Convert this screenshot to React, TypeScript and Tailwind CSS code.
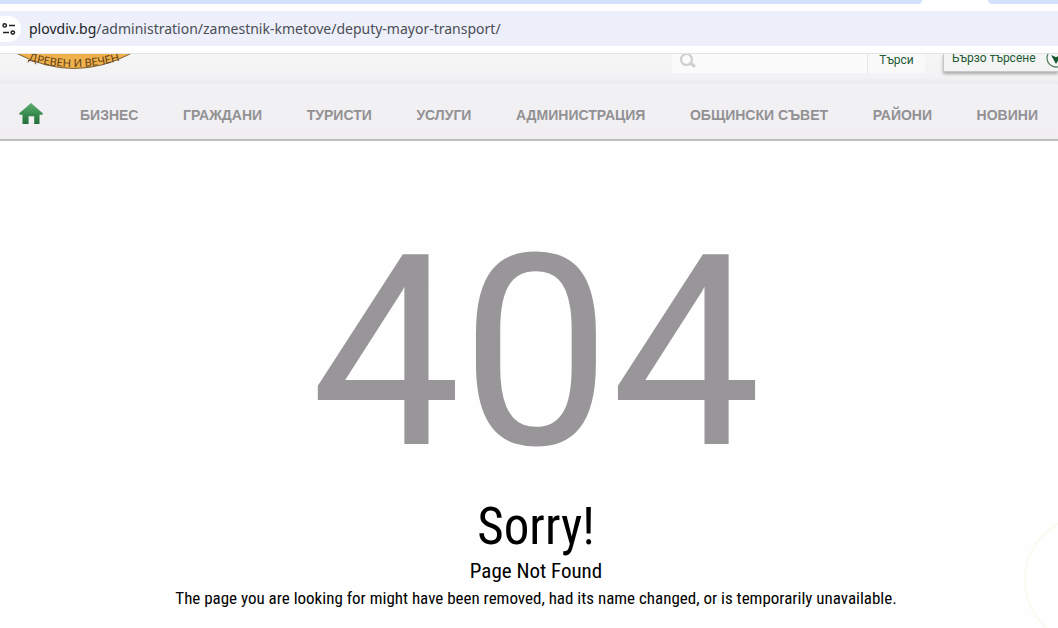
import React from 'react'

type NavItem = {
  label: string
  href: string
}

const navItems: NavItem[] = [
  { label: 'БИЗНЕС', href: '#business' },
  { label: 'ГРАЖДАНИ', href: '#citizens' },
  { label: 'ТУРИСТИ', href: '#tourists' },
  { label: 'УСЛУГИ', href: '#services' },
  { label: 'АДМИНИСТРАЦИЯ', href: '#administration' },
  { label: 'ОБЩИНСКИ СЪВЕТ', href: '#council' },
  { label: 'РАЙОНИ', href: '#districts' },
  { label: 'НОВИНИ', href: '#news' },
]

const SiteSettingsIcon: React.FC = () => (
  <svg viewBox="0 0 14 14" className="w-[14px] h-[14px]" fill="none" stroke="#1f2024" strokeWidth="1.5" aria-hidden="true">
    <circle cx="2.700" cy="3.400" r="1.700" />
    <path d="M7 3.400h6M1 10.600h6" />
    <circle cx="10.800" cy="10.600" r="1.700" />
  </svg>
)

const HomeIcon: React.FC = () => (
  <svg viewBox="0 0 24 21" className="w-6 h-[21px]" aria-hidden="true">
    <defs>
      <linearGradient id="home-fill" x1="0" y1="0" x2="0" y2="1">
        <stop offset="0" stopColor="#5fae72" />
        <stop offset="0.55" stopColor="#378a4d" />
        <stop offset="1" stopColor="#23703a" />
      </linearGradient>
    </defs>
    <path fill="url(#home-fill)" d="M12 0L24 10.500l-.8 1.200H20.500V21h-5.300v-7.800H9.600V21H3.500v-9.300H.8L0 10.500z" />
  </svg>
)

// Lower edge of the city seal, the rest is scrolled out of view
const CitySeal: React.FC = () => (
  <svg viewBox="0 0 120 18" className="w-[120px] h-[18px]" role="img" aria-label="Древен и вечен">
    <defs>
      <path id="seal-arc" d="M0 2Q60 24 120 2" />
    </defs>
    <path d="M2 -1Q60 30 118 -1z" fill="#eeb14c" stroke="#7d6136" strokeWidth="1" />
    <text fill="#644119" fontSize="11" className="font-['Lato',sans-serif]">
      <textPath href="#seal-arc" startOffset="50%" textAnchor="middle">ДРЕВЕН И ВЕЧЕН</textPath>
    </text>
  </svg>
)

const BrowserBar: React.FC = () => (
  <div className="bg-white border-b border-[#e3e3e6]">
    <div className="flex h-1">
      <div className="grow bg-[#d3e3fd] rounded-br-lg" />
      <div className="w-[66px]" />
      <div className="w-[70px] bg-[#d3e3fd] rounded-bl-lg" />
    </div>
    <div className="mt-[7px] mb-[7px] h-[35px] bg-[#edeffa] flex items-center">
      <button type="button" aria-label="Site information" className="w-[21px] h-[26px] pl-[2px] rounded-r-full bg-white flex items-center shrink-0">
        <SiteSettingsIcon />
      </button>
      <a href="#url" className="pl-2 font-['Noto_Sans',sans-serif] text-sm text-[#4b4e55] whitespace-nowrap">
        <span className="text-[#202226]">plovdiv.bg</span>/administration/zamestnik-kmetove/deputy-mayor-transport/
      </a>
    </div>
  </div>
)

const SearchRow: React.FC = () => (
  <div className="flex h-[23px] overflow-hidden">
    <div className="pl-[14px] grow">
      <CitySeal />
    </div>
    <form className="flex items-start h-[19px]" onSubmit={(e) => e.preventDefault()}>
      <label className="flex items-start w-[196px] h-[19px] bg-[#fbfbfc] border-r border-[#e4e4e6]">
        <svg viewBox="0 0 18 18" className="w-[18px] h-[18px] ml-[7px] -mt-1 shrink-0" fill="none" stroke="#cfcfd2" aria-hidden="true">
          <circle cx="7.500" cy="9.500" r="5.500" strokeWidth="2.200" />
          <path d="M12 13.500l3 2.500" strokeWidth="3" strokeLinecap="round" />
        </svg>
        <input type="text" aria-label="Търси" className="w-full h-[19px] bg-transparent outline-none" />
      </label>
      <button type="submit" className="w-[57px] h-[19px] pb-2 bg-[#f9f9fa] font-['Roboto',sans-serif] text-xs leading-3 text-[#1f5a33]">
        Търси
      </button>
    </form>
    <button type="button" className="ml-[18px] h-[18px] w-[115px] pl-2 flex items-start gap-[10px] shrink-0 bg-[#f3f4f3] border-l border-b border-[#c6c8c7] shadow-[0_2px_3px_#a9a9a9] font-['Roboto',sans-serif] text-xs leading-[9px] text-[#1f5a33] whitespace-nowrap">
      Бързо търсене
      <svg viewBox="0 0 20 20" className="w-5 h-5 -mt-[6px] shrink-0" aria-hidden="true">
        <circle cx="10" cy="10" r="9" fill="#f5f8f5" stroke="#578267" strokeWidth="1.300" />
        <path d="M5 7l5 2.200L15 7l-5 9z" fill="#14592d" />
      </svg>
    </button>
  </div>
)

const SiteHeader: React.FC = () => (
  <header className="bg-linear-to-b from-[#f5f5f6] via-[#f1f0f3] to-[#f1eff1] border-b-2 border-[#bfbec1]">
    <SearchRow />
    <div className="h-[7px] bg-linear-to-b from-transparent to-[#ebebed]" />
    <nav aria-label="Основно меню" className="h-[55px] pt-1 pl-[19px] pr-5 flex items-center">
      <a href="#home" aria-label="Начало" className="w-[61px] shrink-0">
        <HomeIcon />
      </a>
      <ul className="grow flex justify-between">
        {navItems.map((item) => (
          <li key={item.href}>
            <a href={item.href} className="font-['Liberation_Sans',sans-serif] font-bold text-sm text-[#929194] whitespace-nowrap">
              {item.label}
            </a>
          </li>
        ))}
      </ul>
    </nav>
  </header>
)

const App: React.FC = () => {
  return (
    <div className="min-h-screen bg-[#fefefe] overflow-hidden">
      <BrowserBar />
      <SiteHeader />
      <main className="relative pt-16 pl-[14px] pb-4 text-center text-black font-['Roboto_Condensed','Liberation_Sans_Narrow','Roboto',sans-serif]">
        <h1 className="font-['Roboto',sans-serif] text-[267px] leading-[296px] text-[#999699]">404</h1>
        <h2 className="text-[51px] leading-[52px]">Sorry!</h2>
        <h3 className="pt-1 text-[21px] leading-7">Page Not Found</h3>
        <p className="text-[17px] leading-[26px]">
          The page you are looking for might have been removed, had its name changed, or is temporarily unavailable.
        </p>
        <div className="absolute -right-[96px] top-[374px] w-[130px] h-[130px] rounded-full border-2 border-[#fafaf0]" />
      </main>
    </div>
  )
}

export default App
